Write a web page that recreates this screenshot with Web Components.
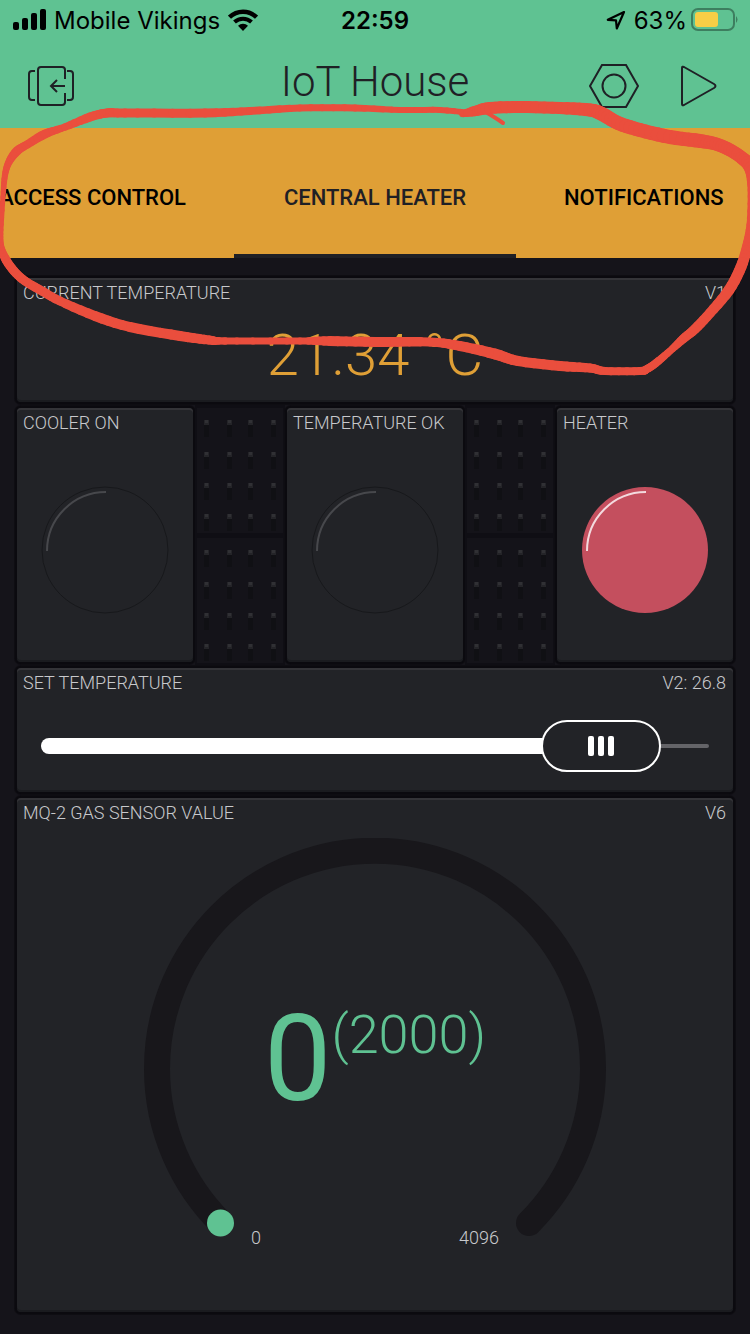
<!DOCTYPE html>
<html lang="en">
<head>
<meta charset="utf-8">
<meta name="viewport" content="width=device-width, initial-scale=1">
<title>IoT House</title>
<style>
  body { margin: 0; background: #15141a; font-family: Roboto, "Liberation Sans", sans-serif; }
</style>
</head>
<body>
<iot-app></iot-app>

<script>
const define = (name, html, setup) => customElements.define(name, class extends HTMLElement {
  constructor() {
    super();
    this.attachShadow({ mode: 'open' }).innerHTML = html;
  }
  connectedCallback() { if (setup) setup(this, this.shadowRoot); }
});

define('status-bar', `
  <style>
    :host { display: grid; grid-template-columns: 1fr auto 1fr; align-items: center; height: 42px; padding: 0 12px;
      font: 400 24px/40px Inter, "Liberation Sans", sans-serif; color: #000; box-sizing: border-box; }
    div { display: flex; align-items: center; }
    .left { gap: 8px; }
    .right { justify-content: flex-end; gap: 8px; }
    .charge { gap: 4px; }
    time { font-weight: 600; }
    svg { flex: none; display: block; margin-bottom: 2px; }
  </style>
  <div class="left">
    <svg width="34" height="22" viewBox="0 0 34 22" aria-label="Signal"><rect x="1" y="13" width="6" height="8" rx="2"/><rect x="10" y="9" width="6" height="12" rx="2"/><rect x="19" y="4" width="6" height="17" rx="2"/><rect x="28" y="0" width="6" height="21" rx="2"/></svg>
    <span>Mobile Vikings</span>
    <svg width="30" height="22" viewBox="0 0 30 22" fill="none" stroke="#000" aria-label="Wi-Fi"><path d="M1.5 8.2a19.5 19.5 0 0 1 27 0" stroke-width="4.4"/><path d="M6.5 13a12.5 12.5 0 0 1 17 0" stroke-width="4"/><path d="M15 22l-5-5.2a7.2 7.2 0 0 1 10 0z" fill="#000" stroke="none"/></svg>
  </div>
  <time>22:59</time>
  <div class="right">
    <svg width="20" height="20" viewBox="0 0 20 20" fill="none" stroke="#000" stroke-width="2.2" stroke-linejoin="round" aria-label="Location"><path d="M18 2L1.8 9.8l8.2.5.8 8.2z"/></svg>
    <div class="charge">
      <span>63%</span>
      <svg width="47" height="24" viewBox="0 0 47 24" aria-label="Battery"><rect x="1" y="1" width="42" height="21" rx="6" fill="none" stroke="#3d7e5f" stroke-width="2"/><rect x="4" y="4" width="23" height="15" rx="3" fill="#f7ce46"/><path d="M45 8q3 3.500 0 7z" fill="#3d7e5f"/></svg>
    </div>
  </div>
`);

define('app-header', `
  <style>
    :host { display: block; background: #5fc292; color: #1f2025; }
    .bar { display: grid; grid-template-columns: 1fr auto 1fr; align-items: center; box-sizing: border-box; height: 86px; padding: 2px 33px 0 27px; }
    h1 { margin: 0 0 8px 6px; font-size: 42px; font-weight: 300; line-height: 56px; }
    .actions { display: flex; justify-content: flex-end; gap: 36px; }
    button { display: block; padding: 0; border: 0; background: none; color: inherit; }
    button svg { display: block; fill: none; stroke: currentColor; stroke-width: 2; }
  </style>
  <status-bar></status-bar>
  <div class="bar">
    <div><button aria-label="Close project"><svg width="48" height="44" viewBox="0 0 48 44"><path d="M38 15V6q0-3-3-3H14q-3 0-3 3v32q0 3 3 3h21q3 0 3-3v-9M8 7H5Q2 7 2 10v23q0 3 3 3h3M40 7h3q3 0 3 3v23q0 3-3 3h-3M38 22H24M30 16l-6 6 6 6"/></svg></button></div>
    <h1>IoT House</h1>
    <div class="actions">
      <button aria-label="Project settings"><svg width="50" height="44" viewBox="0 0 50 44"><path d="M13 1h24l12 21-12 21H13L1 22z"/><circle cx="25" cy="22" r="11.500"/></svg></button>
      <button aria-label="Run"><svg width="42" height="44" viewBox="0 0 42 44" stroke-linejoin="round"><path d="M7 4Q7 2 9 3l30 17q3 2 0 4L9 41q-2 1-2-1z"/></svg></button>
    </div>
  </div>
`);

define('tab-strip', `
  <style>
    :host { display: grid; grid-template-columns: minmax(0, 1fr) auto minmax(0, 1fr); overflow: hidden; background: #df9f36; }
    button { display: flex; justify-content: center; align-items: center; height: 130px; box-sizing: border-box; padding: 14px 0 0;
      border: 0; border-bottom: 4px solid transparent; background: none; font: 500 22px/32px Roboto, "Liberation Sans", sans-serif; color: #000; white-space: nowrap; }
    .before { justify-content: flex-end; padding-right: 48px; }
    .after { justify-content: flex-start; padding-left: 48px; }
    [aria-selected=true] { min-width: 282px; border-color: #1f2025; color: #1f2025; }
  </style>
  <button role="tab" class="before">ACCESS CONTROL</button>
  <button role="tab" aria-selected="true">CENTRAL HEATER</button>
  <button role="tab" class="after">NOTIFICATIONS</button>
`, host => host.setAttribute('role', 'tablist'));

define('widget-panel', `
  <style>
    :host { display: flex; flex-direction: column; margin: 3px 2px; border-radius: 4px; background: #222327;
      box-shadow: inset 0 2px #343438, inset 0 -2px #1a1b1f, 0 0 0 2px #0b0a0f, 0 0 0 3px #0e0d12; }
    header { display: flex; justify-content: space-between; padding: 5px 7px 4px 6px; font-size: 18px; font-weight: 300; line-height: 20px; color: #c8c9cc; white-space: nowrap; }
    .body { flex: 1; display: grid; place-items: center; }
  </style>
  <header><span class="name"></span><span class="pin"></span></header>
  <div class="body"><slot></slot></div>
`, (host, root) => {
  root.querySelector('.name').textContent = host.getAttribute('name');
  root.querySelector('.pin').textContent = host.getAttribute('pin') || '';
});

define('value-display', `
  <style>:host { display: block; font-size: 58px; font-weight: 300; line-height: 64px; color: #df9f36; }</style>
  <slot></slot>
`);

define('led-light', `
  <style>
    :host { display: block; --fill: none; --rim: #17181b; --shine: #47484c; }
    :host([on]) { --fill: #c44f5e; --rim: none; --shine: #f3dade; }
    svg { display: block; fill: none; }
    circle { fill: var(--fill); stroke: var(--rim); }
    path { stroke: var(--shine); stroke-width: 2; }
  </style>
  <svg width="128" height="128" viewBox="0 0 128 128"><circle cx="64" cy="64" r="63"/><path d="M6 65A59 59 0 0 1 65 6"/></svg>
`);

define('pin-board', `
  <style>
    :host { display: grid; grid-auto-rows: 130px; }
    svg { display: block; width: 100%; height: 130px; }
  </style>
`, (host, root) => {
  let pins = '<rect x="2" y="3" width="86" height="125" fill="#141319"/>';
  for (const y of [15, 47, 78, 109])
    for (const x of [9, 32, 53, 76])
      pins += `<rect x="${x}" y="${y + 5}" width="5" height="12" fill="#101014"/><rect x="${x}" y="${y}" width="5" height="5" fill="#242428"/><rect x="${x + 1}" y="${y}" width="3" height="3" fill="#303034"/>`;
  const cell = `<svg viewBox="0 0 90 130"><rect width="90" height="130" fill="#0f0e14"/>${pins}</svg>`;
  root.innerHTML += cell + cell;
});

define('range-slider', `
  <style>
    :host { display: block; width: 100%; box-sizing: border-box; padding: 3px 24px 0; }
    div { display: grid; align-items: center; }
    div > * { grid-area: 1 / 1; }
    .rail { height: 4px; border-radius: 2px; background: #646468; }
    .fill { height: 16px; border-radius: 8px; background: #fff; width: calc((100% - 120px) * var(--ratio) + 20px); }
    input { appearance: none; width: 100%; height: 52px; margin: 0; background: none; }
    input::-webkit-slider-runnable-track { height: 52px; background: none; }
    input::-webkit-slider-thumb { appearance: none; box-sizing: border-box; width: 120px; height: 52px; border: 2px solid #fff; border-radius: 26px;
      background: #222327 url("data:image/svg+xml,%3Csvg xmlns='http://www.w3.org/2000/svg' width='26' height='20' fill='white'%3E%3Crect width='6' height='20' rx='2'/%3E%3Crect x='10' width='6' height='20' rx='2'/%3E%3Crect x='20' width='6' height='20' rx='2'/%3E%3C/svg%3E") center no-repeat; }
  </style>
  <div><span class="rail"></span><span class="fill"></span><input type="range" aria-label="Set temperature" min="0" max="29.4" step="0.1" value="26.8"></div>
`, (host, root) => {
  const input = root.querySelector('input');
  const update = () => host.style.setProperty('--ratio', input.value / input.max);
  input.addEventListener('input', update);
  update();
});

define('radial-gauge', `
  <style>
    :host { display: grid; width: 462px; max-width: 100%; align-self: start; padding-top: 11px; }
    svg, .value, .scale { grid-area: 1 / 1; }
    svg { display: block; width: 100%; }
    .value { place-self: center; display: flex; align-items: flex-start; padding-top: 26px; color: #5fc292; white-space: nowrap; }
    .now { font-size: 120px; font-weight: 400; line-height: 120px; }
    .limit { font-size: 54px; font-weight: 300; line-height: 72px; }
    .scale { align-self: end; display: flex; justify-content: space-between; padding: 0 107px; font-size: 18px; font-weight: 300; line-height: 30px; color: #c8c9cc; }
  </style>
  <svg viewBox="0 0 462 415"><path d="M77 385A218 218 0 1 1 385 385" fill="none" stroke="#18171b" stroke-width="26" stroke-linecap="round"/><circle cx="76.500" cy="385" r="13.500" fill="#5fc292"/></svg>
  <div class="value"><span class="now">0</span><span class="limit">(2000)</span></div>
  <div class="scale"><span>0</span><span>4096</span></div>
`);

// Hand-drawn marker loop: x, y and pen width along the stroke.
const MARKER = [
  [462,114,5],[475,111,10],[490,108,12],[520,107,12],[560,108,12],[590,110,13],[602,114,14],[618,123,14],[640,130,14],[670,137,14],
  [700,141,14],[716,144,13],[730,150,13],[742,158,13],[751,168,14],[753,190,11],[751,225,9],[747,247,10],[741,267,11],[729,290,11],
  [710,313,10],[695,329,10],[683,339,9],[670,351,7],[656,363,8],[647,369,8],[640,371,8],[605,371,8],[590,368,9],[560,366,10],
  [518,361,10],[495,354,11],[460,346,10],[430,342,9],[375,342,10],[330,341,10],[300,341,7],[225,341,7],[209,340,9],[180,336,10],
  [130,327,10],[95,316,10],[60,301,9],[42,291,9],[25,281,9],[14,271,9],[5,258,9],[1,245,6],[1,230,5],[3,197,5],
  [5,175,6],[9,162,7],[17,151,9],[28,144,8],[45,134,9],[65,127,7],[90,117,9],[107,113,9],[125,113,9],[205,113,9],
  [250,111,8],[300,108,7],[355,108,7],[400,110,6],[440,110,6],[470,113,6]
];

define('marker-loop', `
  <style>
    :host { position: absolute; top: 0; left: 0; width: 100%; pointer-events: none; }
    svg { display: block; width: 100%; overflow: hidden; }
  </style>
  <svg viewBox="0 0 750 400" fill="none" stroke="#ea4e3d" stroke-linecap="round" aria-hidden="true"><path d="M484 111Q496 118 503 123" stroke-width="4"/></svg>
`, (host, root) => {
  const at = i => MARKER[Math.max(0, Math.min(MARKER.length - 1, i))];
  let out = '', prev = MARKER[0];
  for (let i = 0; i < MARKER.length - 1; i++)
    for (let s = 1; s <= 5; s++) {
      const t = s / 5, a = at(i - 1), b = at(i), c = at(i + 1), d = at(i + 2);
      const p = [0, 1].map(k => (2 * b[k] + (c[k] - a[k]) * t + (2 * a[k] - 5 * b[k] + 4 * c[k] - d[k]) * t * t + (3 * b[k] - a[k] - 3 * c[k] + d[k]) * t * t * t) / 2);
      out += `<path d="M${prev[0]} ${prev[1]}L${p[0]} ${p[1]}" stroke-width="${b[2] + (c[2] - b[2]) * t}"/>`;
      prev = p;
    }
  root.querySelector('svg').innerHTML += out;
});

define('iot-app', `
  <style>
    :host { display: block; position: relative; overflow: hidden; min-height: 100vh; }
    main { display: grid; grid-template-columns: 2fr 1fr 2fr 1fr 2fr; grid-template-rows: 130px 260px 130px 520px; padding: 17px 15px 19px; }
    .wide { grid-column: 1 / -1; }
  </style>
  <app-header></app-header>
  <tab-strip></tab-strip>
  <main>
    <widget-panel class="wide" name="CURRENT TEMPERATURE" pin="V1"><value-display>21.34 °C</value-display></widget-panel>
    <widget-panel name="COOLER ON"><led-light></led-light></widget-panel>
    <pin-board></pin-board>
    <widget-panel name="TEMPERATURE OK"><led-light></led-light></widget-panel>
    <pin-board></pin-board>
    <widget-panel name="HEATER"><led-light on></led-light></widget-panel>
    <widget-panel class="wide" name="SET TEMPERATURE" pin="V2: 26.8"><range-slider></range-slider></widget-panel>
    <widget-panel class="wide" name="MQ-2 GAS SENSOR VALUE" pin="V6"><radial-gauge></radial-gauge></widget-panel>
  </main>
  <marker-loop></marker-loop>
`);
</script>
</body>
</html>
